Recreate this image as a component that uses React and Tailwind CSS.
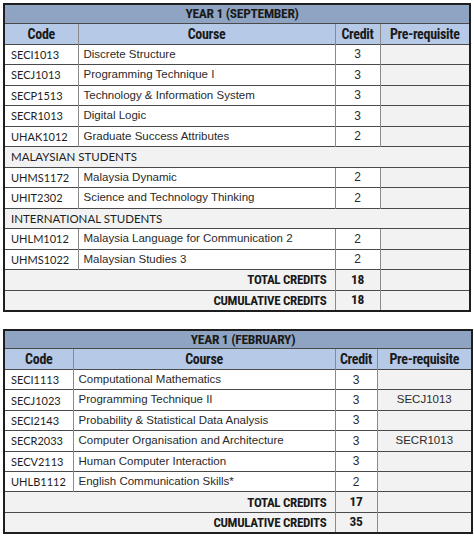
const sept = {
  title: 'YEAR 1 (SEPTEMBER)',
  width: 'w-[467px]',
  cols: ['w-[74px]', 'w-[257px]', 'w-[45px]', 'w-[90px]'],
  rows: [
    { code: 'SECI1013', name: 'Discrete Structure', cr: 3 },
    { code: 'SECJ1013', name: 'Programming Technique I', cr: 3 },
    { code: 'SECP1513', name: 'Technology & Information System', cr: 3 },
    { code: 'SECR1013', name: 'Digital Logic', cr: 3 },
    { code: 'UHAK1012', name: 'Graduate Success Attributes', cr: 2 },
    { group: 'MALAYSIAN STUDENTS' },
    { code: 'UHMS1172', name: 'Malaysia Dynamic', cr: 2 },
    { code: 'UHIT2302', name: 'Science and Technology Thinking', cr: 2 },
    { group: 'INTERNATIONAL STUDENTS' },
    { code: 'UHLM1012', name: 'Malaysia Language for Communication 2', cr: 2 },
    { code: 'UHMS1022', name: 'Malaysian Studies 3', cr: 2 },
  ],
  total: 18,
  cumulative: 18,
};

const feb = {
  title: 'YEAR 1 (FEBRUARY)',
  width: 'w-[468px]',
  cols: ['w-[69px]', 'w-[262px]', 'w-[42px]', 'w-[95px]'],
  rows: [
    { code: 'SECI1113', name: 'Computational Mathematics', cr: 3 },
    { code: 'SECJ1023', name: 'Programming Technique II', cr: 3, pre: 'SECJ1013' },
    { code: 'SECI2143', name: 'Probability & Statistical Data Analysis', cr: 3 },
    { code: 'SECR2033', name: 'Computer Organisation and Architecture', cr: 3, pre: 'SECR1013' },
    { code: 'SECV2113', name: 'Human Computer Interaction', cr: 3 },
    { code: 'UHLB1112', name: 'English Communication Skills*', cr: 2 },
  ],
  total: 17,
  cumulative: 35,
};

const body = "font-['Liberation_Sans',Arial,sans-serif] text-[#2a2a2a]";
const calibri = "font-['Lato','Open_Sans',sans-serif] text-[#1e1e1e]";
const head = "font-['Liberation_Sans_Narrow','Roboto_Condensed','Roboto',sans-serif] font-bold tracking-[-0.3px] text-[#1a1a1a]";

// horizontal lines dark, vertical lines a bit lighter
const cell = 'border-t border-t-[#4a4a4a] border-l border-l-[#8a8a8a] p-0 leading-none';

function Plan({ data, rowH }) {
  return (
    <table className={`${data.width} table-fixed border-collapse border-2 border-[#1e1e1e]`}>
      <colgroup>
        {data.cols.map((c, i) => (
          <col key={i} className={c} />
        ))}
      </colgroup>
      <tbody>
        <tr className="h-[19px] bg-[#8fa4c3]">
          <td colSpan={4} className={`${head} text-[13.5px] leading-none text-center p-0 pl-[10px]`}>
            {data.title}
          </td>
        </tr>
        <tr className="h-[21px] bg-[#b6c9e6] text-[14px]">
          <td className={`${cell} border-t-[#2a2a2a] ${head} text-center`}>Code</td>
          <td className={`${cell} border-t-[#2a2a2a] ${head} text-center`}>Course</td>
          <td className={`${cell} border-t-[#2a2a2a] ${head} text-center`}>Credit</td>
          <td className={`${cell} border-t-[#2a2a2a] ${head} text-center`}>Pre-requisite</td>
        </tr>
        {data.rows.map((r, i) =>
          r.group ? (
            <tr key={i} className={`${rowH} bg-[#f2f2f2]`}>
              <td colSpan={4} className={`${cell} ${calibri} text-[11.5px] pl-[6px]`}>
                {r.group}
              </td>
            </tr>
          ) : (
            <tr key={i} className={rowH}>
              <td className={`${cell} ${calibri} text-[11px] pl-[6px] bg-white`}>{r.code}</td>
              <td className={`${cell} ${body} text-[11.5px] pl-[5px] bg-white`}>{r.name}</td>
              <td className={`${cell} ${body} text-[12px] text-center bg-white`}>{r.cr}</td>
              <td className={`${cell} ${body} text-[11.5px] text-center bg-[#f2f2f2]`}>{r.pre}</td>
            </tr>
          )
        )}
        <tr className={`${rowH} bg-[#f2f2f2]`}>
          <td colSpan={2} className={`${cell} ${head} text-[13px] text-right pr-[8px]`}>
            TOTAL CREDITS
          </td>
          <td className={`${cell} ${head} text-[13.5px] text-center`}>{data.total}</td>
          <td className={cell}></td>
        </tr>
        <tr className={`${rowH} bg-[#f2f2f2]`}>
          <td colSpan={2} className={`${cell} ${head} text-[13px] text-right pr-[8px]`}>
            CUMULATIVE CREDITS
          </td>
          <td className={`${cell} ${head} text-[13.5px] text-center`}>{data.cumulative}</td>
          <td className={cell}></td>
        </tr>
      </tbody>
    </table>
  );
}

export default function App() {
  return (
    <div className="w-[474px] h-[537px] bg-white pt-[3px] pl-[3px] flex flex-col gap-[17px] overflow-hidden">
      <Plan data={sept} rowH="h-[20.5px]" />
      <Plan data={feb} rowH="h-[20.4px]" />
    </div>
  );
}
